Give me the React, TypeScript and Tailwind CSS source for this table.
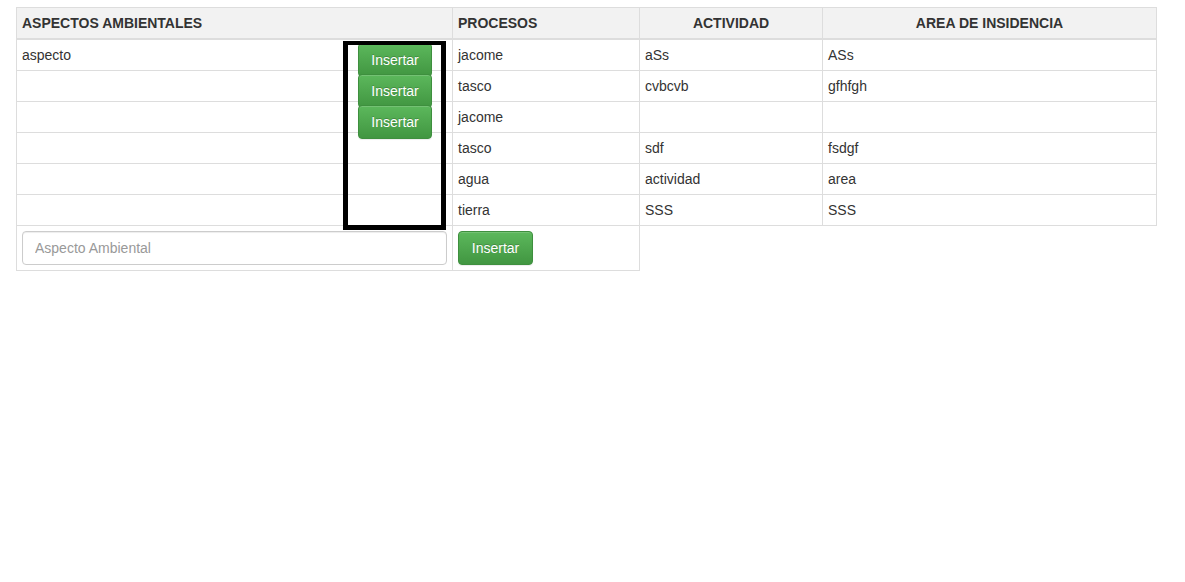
import React from "react";

const rows = [
  { aspecto: "aspecto", proceso: "jacome", actividad: "aSs", area: "ASs" },
  { aspecto: "", proceso: "tasco", actividad: "cvbcvb", area: "gfhfgh" },
  { aspecto: "", proceso: "jacome", actividad: "", area: "" },
  { aspecto: "", proceso: "tasco", actividad: "sdf", area: "fsdgf" },
  { aspecto: "", proceso: "agua", actividad: "actividad", area: "area" },
  { aspecto: "", proceso: "tierra", actividad: "SSS", area: "SSS" },
];

function InsertButton({ className = "" }: { className?: string }) {
  return (
    <button
      className={`h-[34px] px-0 text-center rounded border border-[#3e8f3e] bg-gradient-to-b from-[#5cb85c] to-[#419641] text-white text-[14px] leading-5 [text-shadow:0_-1px_0_rgba(0,0,0,0.2)] shadow-[inset_0_1px_0_rgba(255,255,255,0.15),0_1px_1px_rgba(0,0,0,0.075)] ${className}`}
    >
      Insertar
    </button>
  );
}

export default function App() {
  const td = "border border-[#ddd] px-[5px] py-[5px] leading-5 align-top";
  const th = "border border-[#ddd] border-b-2 px-[5px] py-[5px] leading-5 font-bold bg-[#f2f2f2]";

  return (
    <div className="relative min-h-[582px] bg-white font-['Liberation_Sans',Arial,sans-serif] text-[14px] text-[#333]">
      <div className="pt-[7px] pl-[16px]">
        <table className="table-fixed border-collapse w-[1140px]">
          <colgroup>
            <col className="w-[436px]" />
            <col className="w-[187px]" />
            <col className="w-[183px]" />
            <col className="w-[334px]" />
          </colgroup>
          <thead>
            <tr>
              <th className={`${th} text-left`}>ASPECTOS AMBIENTALES</th>
              <th className={`${th} text-left`}>PROCESOS</th>
              <th className={`${th} text-center`}>ACTIVIDAD</th>
              <th className={`${th} text-center`}>AREA DE INSIDENCIA</th>
            </tr>
          </thead>
          <tbody>
            {rows.map((r, i) => (
              <tr key={i}>
                <td className={td}>
                  <div className="flex h-5 items-start justify-between">
                    <span>{r.aspecto}</span>
                    {i < 3 && <InsertButton className="w-[74px] -mt-[2px] mr-[15px] shrink-0" />}
                  </div>
                </td>
                <td className={td}>{r.proceso}</td>
                <td className={td}>{r.actividad}</td>
                <td className={td}>{r.area}</td>
              </tr>
            ))}
            <tr>
              <td className={td}>
                <input
                  placeholder="Aspecto Ambiental"
                  className="block w-full h-[34px] px-3 rounded border border-[#ccc] bg-white text-[14px] leading-5 placeholder:text-[#999] shadow-[inset_0_1px_1px_rgba(0,0,0,0.075)] outline-none"
                />
              </td>
              <td className={td}>
                <InsertButton className="w-[75px]" />
              </td>
            </tr>
          </tbody>
        </table>
      </div>

      {/* annotation box drawn over the screenshot */}
      <div className="absolute left-[343px] top-[41px] w-[103px] h-[189px] border-[5px] border-t-4 border-black pointer-events-none" />
    </div>
  );
}
